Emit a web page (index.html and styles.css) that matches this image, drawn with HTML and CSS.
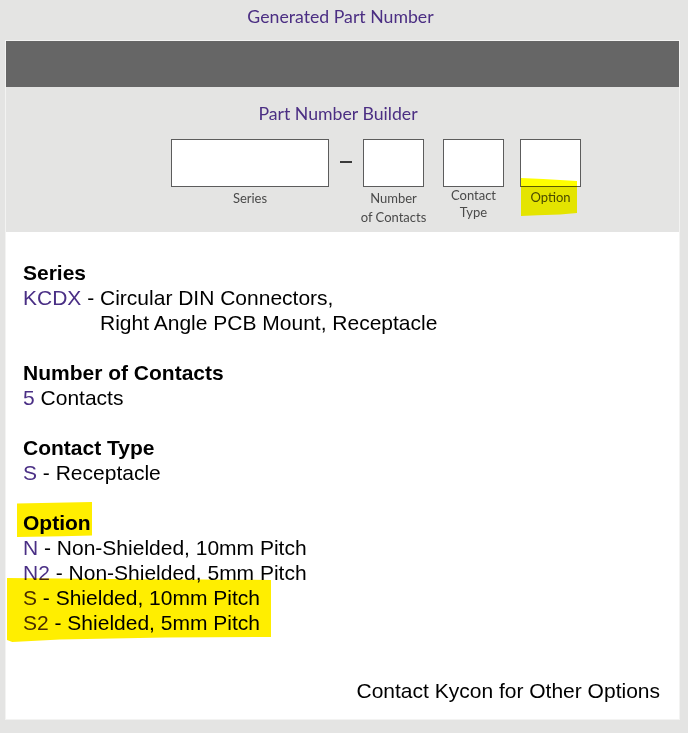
FILE: index.html
```html
<!DOCTYPE html>
<html lang="en">
<head>
<meta charset="utf-8">
<title>Generated Part Number</title>
<link rel="stylesheet" href="styles.css">
</head>
<body>
<div class="frame">
  <div class="title">Generated Part Number</div>
  <div class="panel">
    <div class="result-bar"></div>
    <div class="builder">
      <div class="builder-title">Part Number Builder</div>
      <div class="fields">
        <div class="field field-series">
          <div class="box"></div>
          <div class="label">Series</div>
        </div>
        <div class="dash-col"><div class="dash"></div></div>
        <div class="field field-small">
          <div class="box"></div>
          <div class="label">Number<br>of Contacts</div>
        </div>
        <div class="field field-small field-contact">
          <div class="box"></div>
          <div class="label label-tight">Contact<br>Type</div>
        </div>
        <div class="field field-small field-option">
          <div class="box"></div>
          <div class="label label-option">Option</div>
        </div>
      </div>
    </div>
    <div class="content">
      <div class="section">
        <div class="heading">Series</div>
        <div class="row"><span class="code">KCDX</span><span class="sep"> - </span><span class="desc">Circular DIN Connectors,<br>Right Angle PCB Mount, Receptacle</span></div>
      </div>
      <div class="section">
        <div class="heading">Number of Contacts</div>
        <div class="row"><span class="code">5</span><span class="sep"> </span><span class="desc">Contacts</span></div>
      </div>
      <div class="section">
        <div class="heading">Contact Type</div>
        <div class="row"><span class="code">S</span><span class="sep"> - </span><span class="desc">Receptacle</span></div>
      </div>
      <div class="section">
        <div class="heading heading-hl">Option</div>
        <div class="row"><span class="code">N</span><span class="sep"> - </span><span class="desc">Non-Shielded, 10mm Pitch</span></div>
        <div class="row"><span class="code">N2</span><span class="sep"> - </span><span class="desc">Non-Shielded, 5mm Pitch</span></div>
        <div class="rows-hl">
          <div class="row"><span class="code">S</span><span class="sep"> - </span><span class="desc">Shielded, 10mm Pitch</span></div>
          <div class="row"><span class="code">S2</span><span class="sep"> - </span><span class="desc">Shielded, 5mm Pitch</span></div>
        </div>
      </div>
      <div class="note">Contact Kycon for Other Options</div>
    </div>
  </div>
</div>
</body>
</html>
```

FILE: styles.css
```css
html, body {
  margin: 0;
  padding: 0;
  background: #ffffff;
}

.frame {
  width: 688px;
  height: 733px;
  background: #e4e4e3;
  box-sizing: border-box;
  overflow: hidden;
}

.title {
  height: 40px;
  line-height: 34px;
  text-align: center;
  font-family: Lato, "Open Sans", sans-serif;
  font-size: 17.7px;
  color: #4b2e83;
  padding-right: 7px;
  box-sizing: border-box;
}

.panel {
  margin-left: 5px;
  width: 675px;
  border: 1px solid rgba(255, 255, 255, 0.55);
  box-sizing: border-box;
}

.result-bar {
  height: 46px;
  background: #666666;
}

.builder {
  height: 145px;
  background: #e4e4e3;
  padding-top: 15px;
  box-sizing: border-box;
}

.builder-title {
  text-align: center;
  font-family: Lato, "Open Sans", sans-serif;
  font-size: 17.7px;
  line-height: 24px;
  color: #4b2e83;
  padding-right: 9px;
}

.fields {
  display: flex;
  align-items: flex-start;
  padding-left: 165px;
  margin-top: 13px;
}

.field {
  display: flex;
  flex-direction: column;
  align-items: center;
  position: relative;
}

.field-series { width: 158px; }
.field-small { width: 61px; }
.field-contact { margin-left: 19px; }
.field-option { margin-left: 16px; }

.box {
  width: 100%;
  height: 48px;
  background: #ffffff;
  border: 1px solid #5c5c5c;
  box-sizing: border-box;
}

.dash-col {
  width: 34px;
  height: 48px;
  display: flex;
  align-items: center;
  justify-content: center;
}

.dash {
  width: 12px;
  height: 2px;
  background: #3a3a3a;
  margin-top: -2px;
}

.label {
  margin-top: 2px;
  font-family: Lato, "Open Sans", sans-serif;
  font-size: 13px;
  line-height: 19px;
  color: #4a4a4a;
  text-align: center;
  white-space: nowrap;
}

.label-tight {
  margin-top: 0;
  line-height: 17px;
}

.label-option {
  margin-top: 1px;
}

.field-option::after {
  content: "";
  position: absolute;
  left: 1px;
  top: 39px;
  width: 56px;
  height: 38px;
  background: #ffff00;
  mix-blend-mode: multiply;
  clip-path: polygon(0 0, 40% 1px, 100% 3px, 100% 92%, 70% 96%, 30% 98%, 0 100%);
}

.content {
  background: #ffffff;
  padding: 28px 19px 16px 17px;
  font-family: "Liberation Sans", Arial, sans-serif;
  font-size: 21px;
  line-height: 25px;
  color: #000000;
}

.section {
  margin-bottom: 25px;
}

.heading {
  font-weight: bold;
  position: relative;
}

.row {
  display: flex;
  align-items: flex-start;
}

.code {
  color: #4a2f85;
}

.sep {
  white-space: pre;
}

.heading-hl::after {
  content: "";
  position: absolute;
  left: -6px;
  top: -8px;
  width: 75px;
  height: 35px;
  background: #ffee00;
  mix-blend-mode: multiply;
  clip-path: polygon(0 4%, 50% 2%, 100% 0, 100% 96%, 60% 98%, 0 100%);
}

.rows-hl {
  position: relative;
}

.rows-hl::after {
  content: "";
  position: absolute;
  left: -16px;
  top: -7px;
  width: 264px;
  height: 64px;
  background: #ffee00;
  mix-blend-mode: multiply;
  clip-path: polygon(0 0, 50% 2%, 100% 3%, 100% 92%, 60% 93%, 20% 96%, 2% 100%, 0 97%);
}

.note {
  margin-top: 43px;
  text-align: right;
}
```
